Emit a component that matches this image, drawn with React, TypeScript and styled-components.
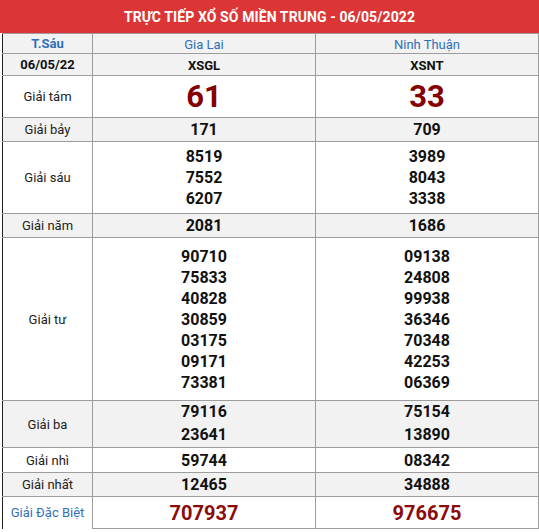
import React from "react";
import styled, { createGlobalStyle } from "styled-components";

const Global = createGlobalStyle`
  html, body { margin: 0; padding: 0; background: #fff; }
  body { font-family: Roboto, "Liberation Sans", Arial, sans-serif; }
`;

const Page = styled.div`
  width: 539px;
`;

const Title = styled.div`
  height: 33px;
  background: #dc3535;
  color: #fff;
  font-weight: 700;
  font-size: 14px;
  display: flex;
  align-items: center;
  justify-content: center;
  letter-spacing: 0.1px;
`;

const Table = styled.table`
  margin-left: 2px;
  width: 536px;
  border-collapse: collapse;
  table-layout: fixed;
  border-left: 1px solid #222;
`;

const Row = styled.tr<{ $gray?: boolean; $h: number }>`
  background: ${(p) => (p.$gray ? "#f2f2f2" : "#fff")};
  height: ${(p) => p.$h}px;
`;

const Cell = styled.td`
  border: 1px solid #9d9d9d;
  text-align: center;
  vertical-align: middle;
  padding: 0;
`;

const LabelCell = styled(Cell)<{ $last?: boolean; $blue?: boolean }>`
  border-left: 1px solid #222;
  font-size: 13px;
  color: ${(p) => (p.$blue ? "#2f6fba" : "#222")};
  ${(p) => (p.$last ? "border-bottom: none;" : "")}
`;

const HeadText = styled.span<{ $bold?: boolean; $blue?: boolean }>`
  font-size: 13px;
  font-weight: ${(p) => (p.$bold ? 700 : 400)};
  color: ${(p) => (p.$blue ? "#2f6fba" : "#111")};
`;

const Num = styled.div<{ $lh?: number }>`
  font-size: 16px;
  font-weight: 700;
  color: #111;
  line-height: ${(p) => p.$lh ?? 21}px;
`;

const BigNum = styled.div`
  font-size: 31px;
  font-weight: 700;
  color: #850000;
  line-height: 36px;
`;

const SpecialNum = styled.div`
  font-size: 20px;
  font-weight: 700;
  color: #8c0a0a;
  line-height: 24px;
`;

type Prize = {
  label: string;
  h: number;
  a: string[];
  b: string[];
  lh?: number;
  kind?: "big" | "special";
};

const prizes: Prize[] = [
  { label: "Giải tám", h: 42, a: ["61"], b: ["33"], kind: "big" },
  { label: "Giải bảy", h: 24, a: ["171"], b: ["709"] },
  { label: "Giải sáu", h: 72, a: ["8519", "7552", "6207"], b: ["3989", "8043", "3338"] },
  { label: "Giải năm", h: 24, a: ["2081"], b: ["1686"] },
  {
    label: "Giải tư",
    h: 163,
    a: ["90710", "75833", "40828", "30859", "03175", "09171", "73381"],
    b: ["09138", "24808", "99938", "36346", "70348", "42253", "06369"],
  },
  { label: "Giải ba", h: 47, a: ["79116", "23641"], b: ["75154", "13890"], lh: 22.7 },
  { label: "Giải nhì", h: 25, a: ["59744"], b: ["08342"] },
  { label: "Giải nhất", h: 24, a: ["12465"], b: ["34888"] },
  { label: "Giải Đặc Biệt", h: 32, a: ["707937"], b: ["976675"], kind: "special" },
];

function Values({ p, vals }: { p: Prize; vals: string[] }) {
  return (
    <Cell>
      {vals.map((v, i) =>
        p.kind === "big" ? (
          <BigNum key={i}>{v}</BigNum>
        ) : p.kind === "special" ? (
          <SpecialNum key={i}>{v}</SpecialNum>
        ) : (
          <Num key={i} $lh={p.lh}>
            {v}
          </Num>
        )
      )}
    </Cell>
  );
}

export default function App() {
  return (
    <Page>
      <Global />
      <Title>TRỰC TIẾP XỔ SỐ MIỀN TRUNG - 06/05/2022</Title>
      <Table>
        <colgroup>
          <col style={{ width: 90 }} />
          <col style={{ width: 223 }} />
          <col style={{ width: 223 }} />
        </colgroup>
        <tbody>
          <Row $gray $h={20}>
            <LabelCell>
              <HeadText $bold $blue>T.Sáu</HeadText>
            </LabelCell>
            <Cell>
              <HeadText $blue>Gia Lai</HeadText>
            </Cell>
            <Cell>
              <HeadText $blue>Ninh Thuận</HeadText>
            </Cell>
          </Row>
          <Row $gray $h={22}>
            <LabelCell>
              <HeadText $bold>06/05/22</HeadText>
            </LabelCell>
            <Cell>
              <HeadText $bold>XSGL</HeadText>
            </Cell>
            <Cell>
              <HeadText $bold>XSNT</HeadText>
            </Cell>
          </Row>
          {prizes.map((p, i) => (
            <Row key={p.label} $gray={i % 2 === 1} $h={p.h}>
              <LabelCell $blue={p.kind === "special"} $last={i === prizes.length - 1}>
                {p.label}
              </LabelCell>
              <Values p={p} vals={p.a} />
              <Values p={p} vals={p.b} />
            </Row>
          ))}
        </tbody>
      </Table>
    </Page>
  );
}
